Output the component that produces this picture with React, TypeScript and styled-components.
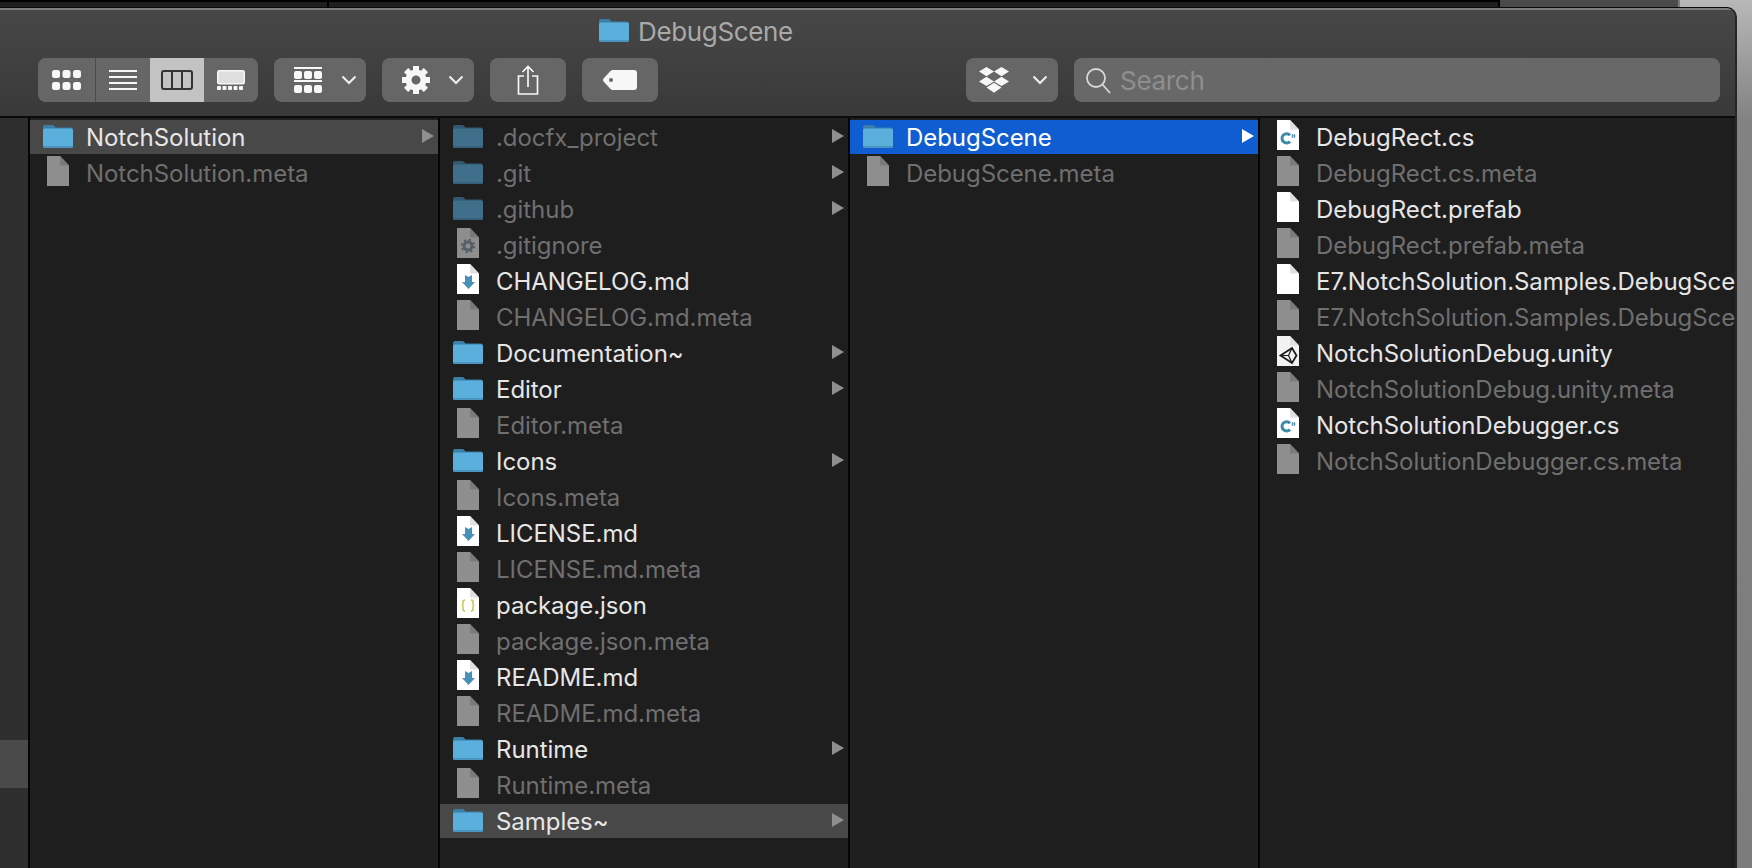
import React from "react";
import styled, { createGlobalStyle } from "styled-components";

const Global = createGlobalStyle`
  html, body { margin: 0; padding: 0; width: 1752px; height: 868px; overflow: hidden; background: #7c7c7c; }
  #root { width: 1752px; height: 868px; }
`;

const Page = styled.div`
  width: 1752px; height: 868px; display: flex; flex-direction: column; overflow: hidden;
  font-family: Inter, "Liberation Sans", sans-serif;
  background: linear-gradient(#b8b8b8 0, #828282 120px, #7c7c7c 100%);
`;
const BackStrip = styled.div`
  height: 7px; flex: none; display: flex;
`;
const BackPane = styled.div<{ $w: number; $tone?: "grey" }>`
  width: ${(p) => p.$w}px; flex: none; box-sizing: border-box; height: 7px;
  background: ${(p) => (p.$tone === "grey" ? "#4a4a4a" : "#1f1f1f")};
  border-top: ${(p) => (p.$tone === "grey" ? "none" : "2px solid #000")};
  border-right: 2px solid ${(p) => (p.$tone === "grey" ? "#7a7a7a" : "#000")};
`;
const Window = styled.div`
  width: 1737px; height: 861px; flex: none; box-sizing: border-box; display: flex; flex-direction: column;
  border-top: 1px solid #0a0a0a; border-right: 2px solid #262626; border-top-right-radius: 10px;
  overflow: hidden; background: #1e1e1e;
`;
const Header = styled.header`
  height: 110px; flex: none; box-sizing: border-box; display: flex; flex-direction: column;
  background: linear-gradient(#474747, #393939); border-top: 2px solid #7d7d7d; border-bottom: 2px solid #0b0b0b;
`;
const TitleBar = styled.div`
  height: 48px; flex: none; display: flex; align-items: center; gap: 9px;
  padding: 0 0 6px 599px; box-sizing: border-box;
`;
const TitleText = styled.span`
  font-size: 26px; color: #a9a9a9; letter-spacing: -0.35px;
`;
const Toolbar = styled.div`
  display: flex; align-items: center; gap: 16px; padding: 0 15px 0 38px; height: 44px;
`;
const Segmented = styled.div`
  display: flex; height: 44px; width: 220px; flex: none; border-radius: 8px; overflow: hidden; background: #666;
`;
const Segment = styled.div<{ $active?: boolean; $w: number }>`
  width: ${(p) => p.$w}px; display: flex; align-items: center; justify-content: center; box-sizing: border-box;
  background: ${(p) => (p.$active ? "#c3c3c3" : "#666")};
`;
const Divider = styled.div`
  width: 1px; background: #4c4c4c; flex: none;
`;
const Btn = styled.div<{ $w: number }>`
  width: ${(p) => p.$w}px; height: 44px; flex: none; border-radius: 8px; background: #666;
  display: flex; align-items: center; justify-content: center;
`;
const MenuBtn = styled.div<{ $pl: number }>`
  width: 92px; height: 44px; flex: none; border-radius: 8px; background: #666; box-sizing: border-box;
  display: flex; align-items: center; padding-left: ${(p) => p.$pl}px;
`;
const Spacer = styled.div`
  width: 276px; flex: none;
`;
const Search = styled.div`
  flex: 1; height: 44px; border-radius: 8px; background: #686868; display: flex; align-items: center;
  padding-left: 11px; gap: 9px;
`;
const SearchText = styled.span`
  font-size: 26px; color: #8f8f8f; letter-spacing: -0.3px;
`;
const Body = styled.div`
  flex: 1; display: flex; min-height: 0;
`;
const Side = styled.div`
  width: 28px; flex: none; background: #2e2e2e; border-right: 2px solid #050505; padding-top: 622px;
`;
const SideHi = styled.div`
  height: 48px; background: #4a4a4a;
`;
const Col = styled.div<{ $grow?: boolean }>`
  width: ${(p) => (p.$grow ? "475px" : "408px")}; flex: none; overflow: hidden; background: #1e1e1e;
  border-right: ${(p) => (p.$grow ? "none" : "2px solid #050505")}; padding-top: 2px;
  display: flex; flex-direction: column; gap: 2px;
`;
const Row = styled.div<{ $state?: "sel" | "path" }>`
  height: 34px; flex: none; display: flex; align-items: center; position: relative; white-space: nowrap;
  background: ${(p) => (p.$state === "sel" ? "#0f5dd0" : p.$state === "path" ? "#484848" : "transparent")};
`;
const IconSlot = styled.div`
  width: 56px; flex: none; display: flex; justify-content: flex-start; align-items: center;
`;
const Name = styled.span<{ $dim?: boolean; $state?: string }>`
  font-size: 24px; letter-spacing: -0.05px;
  color: ${(p) => (p.$state === "sel" ? "#fff" : p.$dim ? "#6f6f6f" : "#e6e6e6")};
`;
const Arrow = styled.svg`
  position: absolute; right: 4px; top: 9px;
`;
const FolderSvg = styled.svg<{ $title?: boolean }>`
  flex: none; margin-left: ${(p) => (p.$title ? 0 : 13)}px; margin-top: -2px;
`;
const FileSvg = styled.svg`
  flex: none; margin-left: 17px; margin-top: -4px;
`;
const ChevronSvg = styled.svg<{ $ml: number }>`
  flex: none; margin-left: ${(p) => p.$ml}px;
`;

const FolderIcon = ({ dim, title }: { dim?: boolean; title?: boolean }) => (
  <FolderSvg $title={title} width="30" height="24" viewBox="0 0 30 24">
    <path d="M0 3q0-2 2-2h7q1.500 0 2.500 1.300l1 1.200h15q2.500 0 2.500 2.500V5H0z" fill={dim ? "#33586f" : "#3a7fa8"} />
    <path d="M0 6q0-1.500 1.500-1.500h27Q30 4.500 30 6v15.500Q30 24 28 24H2q-2 0-2-2.500z" fill={dim ? "#3f6f8b" : "#5aafdc"} />
    <path d="M0 22h30v.5Q30 24 28 24H2q-2 0-2-1.500z" fill={dim ? "#375f79" : "#4a94bf"} />
  </FolderSvg>
);

type Badge = "cs" | "md" | "json" | "unity" | "gear";
const FileIcon = ({ bright, badge }: { bright?: boolean; badge?: Badge }) => {
  const fill = bright ? "#fff" : "#8e8e8e";
  return (
    <FileSvg width="22" height="30" viewBox="0 0 22 30">
      <path d="M0 0h13l9 9.500V30H0z" fill={badge === "unity" ? "#f2f2f2" : fill} />
      <path d="M13 0l9 9.500h-9z" fill={bright ? "#e0e0e0" : "#7a7a7a"} />
      {badge === "md" && <path d="M8 11l3.500 2 3.500-2v7h3l-6.500 7-6.500-7h3z" fill="#4a8fb5" />}
      {badge === "cs" && (
        <>
          <path d="M13 15.200A4.600 4.600 0 1 0 13 21.400" stroke="#3f89ab" strokeWidth="3" fill="none" />
          <path d="M15.500 14v4M17.500 14v4M14.500 15.300h4M14.500 16.800h4" stroke="#3f89ab" strokeWidth=".7" />
        </>
      )}
      {badge === "json" && (
        <g stroke="#c4c84a" strokeWidth="1.500" fill="none">
          <path d="M8 12q-2 0-2 2v2q0 1.500-1.300 1.500Q6 17.500 6 19v2q0 2 2 2" />
          <path d="M14 12q2 0 2 2v2q0 1.500 1.300 1.500Q16 17.500 16 19v2q0 2-2 2" />
        </g>
      )}
      {badge === "unity" && (
        <g stroke="#1c1c1c" fill="none">
          <path d="M3.500 19.500L15 12l4.500 7.500L15 27z" strokeWidth="1.800" />
          <path d="M4 19.500h7.500M15 12l-3.500 7.500L15 27" strokeWidth="1.200" />
        </g>
      )}
      {badge === "gear" && (
        <g>
          <circle cx="11" cy="18" r="4" fill="none" stroke="#565f66" strokeWidth="3" />
          <circle cx="11" cy="18" r="6.200" fill="none" stroke="#565f66" strokeWidth="2" strokeDasharray="2.200 2.670" />
        </g>
      )}
    </FileSvg>
  );
};

type Item = { name: string; dir?: boolean; dim?: boolean; badge?: Badge; plain?: boolean; state?: "sel" | "path" };

const col1: Item[] = [
  { name: "NotchSolution", dir: true, state: "path" },
  { name: "NotchSolution.meta", dim: true },
];
const col2: Item[] = [
  { name: ".docfx_project", dir: true, dim: true },
  { name: ".git", dir: true, dim: true },
  { name: ".github", dir: true, dim: true },
  { name: ".gitignore", dim: true, badge: "gear" },
  { name: "CHANGELOG.md", badge: "md", plain: true },
  { name: "CHANGELOG.md.meta", dim: true },
  { name: "Documentation~", dir: true },
  { name: "Editor", dir: true },
  { name: "Editor.meta", dim: true },
  { name: "Icons", dir: true },
  { name: "Icons.meta", dim: true },
  { name: "LICENSE.md", badge: "md", plain: true },
  { name: "LICENSE.md.meta", dim: true },
  { name: "package.json", badge: "json", plain: true },
  { name: "package.json.meta", dim: true },
  { name: "README.md", badge: "md", plain: true },
  { name: "README.md.meta", dim: true },
  { name: "Runtime", dir: true },
  { name: "Runtime.meta", dim: true },
  { name: "Samples~", dir: true, state: "path" },
];
const col3: Item[] = [
  { name: "DebugScene", dir: true, state: "sel" },
  { name: "DebugScene.meta", dim: true },
];
const col4: Item[] = [
  { name: "DebugRect.cs", badge: "cs", plain: true },
  { name: "DebugRect.cs.meta", dim: true },
  { name: "DebugRect.prefab", plain: true },
  { name: "DebugRect.prefab.meta", dim: true },
  { name: "E7.NotchSolution.Samples.DebugScene.asmdef", plain: true },
  { name: "E7.NotchSolution.Samples.DebugScene.asmdef.meta", dim: true },
  { name: "NotchSolutionDebug.unity", badge: "unity", plain: true },
  { name: "NotchSolutionDebug.unity.meta", dim: true },
  { name: "NotchSolutionDebugger.cs", badge: "cs", plain: true },
  { name: "NotchSolutionDebugger.cs.meta", dim: true },
];

const FinderRow = ({ item }: { item: Item }) => (
  <Row $state={item.state}>
    <IconSlot>
      {item.dir ? <FolderIcon dim={item.dim} /> : <FileIcon bright={item.plain} badge={item.badge} />}
    </IconSlot>
    <Name $dim={item.dim} $state={item.state}>{item.name}</Name>
    {item.dir && (
      <Arrow width="12" height="14" viewBox="0 0 12 14">
        <path d="M0 0l12 7-12 7z" fill={item.state === "sel" ? "#fff" : "#8f8f8f"} />
      </Arrow>
    )}
  </Row>
);

const Chevron = ({ ml }: { ml: number }) => (
  <ChevronSvg $ml={ml} width="16" height="10" viewBox="0 0 16 10">
    <path d="M1.500 1.500L8 8l6.500-6.500" stroke="#f2f2f2" strokeWidth="2" fill="none" />
  </ChevronSvg>
);

const GridIcon = () => (
  <svg width="29" height="20" viewBox="0 0 29 20" fill="#f7f7f7">
    {[0, 10.500, 21].map((x) => [0, 12].map((y) => <rect key={`${x}${y}`} x={x} y={y} width="8" height="8" rx="2.500" />))}
  </svg>
);
const ListIcon = () => (
  <svg width="28" height="20" viewBox="0 0 28 20" fill="#f7f7f7">
    {[0, 6, 12, 18].map((y) => <rect key={y} x="0" y={y} width="28" height="2" />)}
  </svg>
);
const ColumnsIcon = () => (
  <svg width="32" height="20" viewBox="0 0 32 20" fill="none" stroke="#333" strokeWidth="2">
    <rect x="1" y="1" width="30" height="18" rx="2" />
    <path d="M11 1v18M21 1v18" />
  </svg>
);
const GalleryIcon = () => (
  <svg width="28" height="20" viewBox="0 0 28 20">
    <rect x=".75" y=".75" width="26.500" height="13" rx="1.500" fill="#dedede" stroke="#f7f7f7" strokeWidth="1.500" />
    {[0, 5.500, 11, 16.500, 22].map((x) => <rect key={x} x={x} y="16" width="4" height="4" rx=".8" fill="#f7f7f7" />)}
  </svg>
);
const GroupIcon = () => (
  <svg width="28" height="26" viewBox="0 0 28 26" fill="#f7f7f7">
    <rect x="0" y="0" width="28" height="2" />
    <rect x="0" y="13" width="28" height="2" />
    {[0, 10, 20].map((x) => [4, 18].map((y) => <rect key={`${x}${y}`} x={x} y={y} width="8" height="8" rx="2" />))}
  </svg>
);
const GearIcon = () => {
  const teeth = [0, 45, 90, 135, 180, 225, 270, 315];
  return (
    <svg width="28" height="28" viewBox="0 0 28 28">
      {teeth.map((a) => <rect key={a} x="11" y="0" width="6" height="6" fill="#f7f7f7" transform={`rotate(${a} 14 14)`} />)}
      <circle cx="14" cy="14" r="7.500" fill="none" stroke="#f7f7f7" strokeWidth="6" />
    </svg>
  );
};
const ShareIcon = () => (
  <svg width="22" height="30" viewBox="0 0 22 30" fill="none" stroke="#f7f7f7" strokeWidth="1.700">
    <path d="M7 11H1.500v18h19V11H15" />
    <path d="M11 22V1.500M5.500 7L11 1.500 16.500 7" />
  </svg>
);
const TagIcon = () => (
  <svg width="34" height="20" viewBox="0 0 34 20">
    <path d="M10 0h21q3 0 3 3v14q0 3-3 3H10q-1.500 0-2.500-1L1 12Q-1 10 1 8l6.500-7Q8.500 0 10 0z" fill="#f7f7f7" />
    <circle cx="8" cy="10" r="2" fill="#666" />
  </svg>
);
const DropboxIcon = () => (
  <svg width="30" height="28" viewBox="0 0 32 28" fill="#f7f7f7">
    <path d="M8 0l8 5-8 5-8-5zM24 0l8 5-8 5-8-5zM8 10.500l8 5-8 5-8-5zM24 10.500l8 5-8 5-8-5zM16 17l8 5-8 5.500L8 22z" />
  </svg>
);
const SearchIcon = () => (
  <svg width="26" height="28" viewBox="0 0 26 28" fill="none" stroke="#d8d8d8" strokeWidth="1.800">
    <circle cx="11" cy="12" r="9" />
    <path d="M17.500 18.500L25 27" />
  </svg>
);

export default function App() {
  return (
    <Page>
      <Global />
      <BackStrip>
        <BackPane $w={329} />
        <BackPane $w={1171} />
        <BackPane $w={180} $tone="grey" />
      </BackStrip>
      <Window>
        <Header>
          <TitleBar>
            <FolderIcon title />
            <TitleText>DebugScene</TitleText>
          </TitleBar>
          <Toolbar>
            <Segmented>
              <Segment $w={57}><GridIcon /></Segment>
              <Divider />
              <Segment $w={54}><ListIcon /></Segment>
              <Segment $w={54} $active><ColumnsIcon /></Segment>
              <Segment $w={54}><GalleryIcon /></Segment>
            </Segmented>
            <MenuBtn $pl={20}><GroupIcon /><Chevron ml={19} /></MenuBtn>
            <MenuBtn $pl={20}><GearIcon /><Chevron ml={18} /></MenuBtn>
            <Btn $w={76}><ShareIcon /></Btn>
            <Btn $w={76}><TagIcon /></Btn>
            <Spacer />
            <MenuBtn $pl={13}><DropboxIcon /><Chevron ml={23} /></MenuBtn>
            <Search><SearchIcon /><SearchText>Search</SearchText></Search>
          </Toolbar>
        </Header>
        <Body>
          <Side><SideHi /></Side>
          <Col>{col1.map((i) => <FinderRow key={i.name} item={i} />)}</Col>
          <Col>{col2.map((i) => <FinderRow key={i.name} item={i} />)}</Col>
          <Col>{col3.map((i) => <FinderRow key={i.name} item={i} />)}</Col>
          <Col $grow>{col4.map((i) => <FinderRow key={i.name} item={i} />)}</Col>
        </Body>
      </Window>
    </Page>
  );
}
